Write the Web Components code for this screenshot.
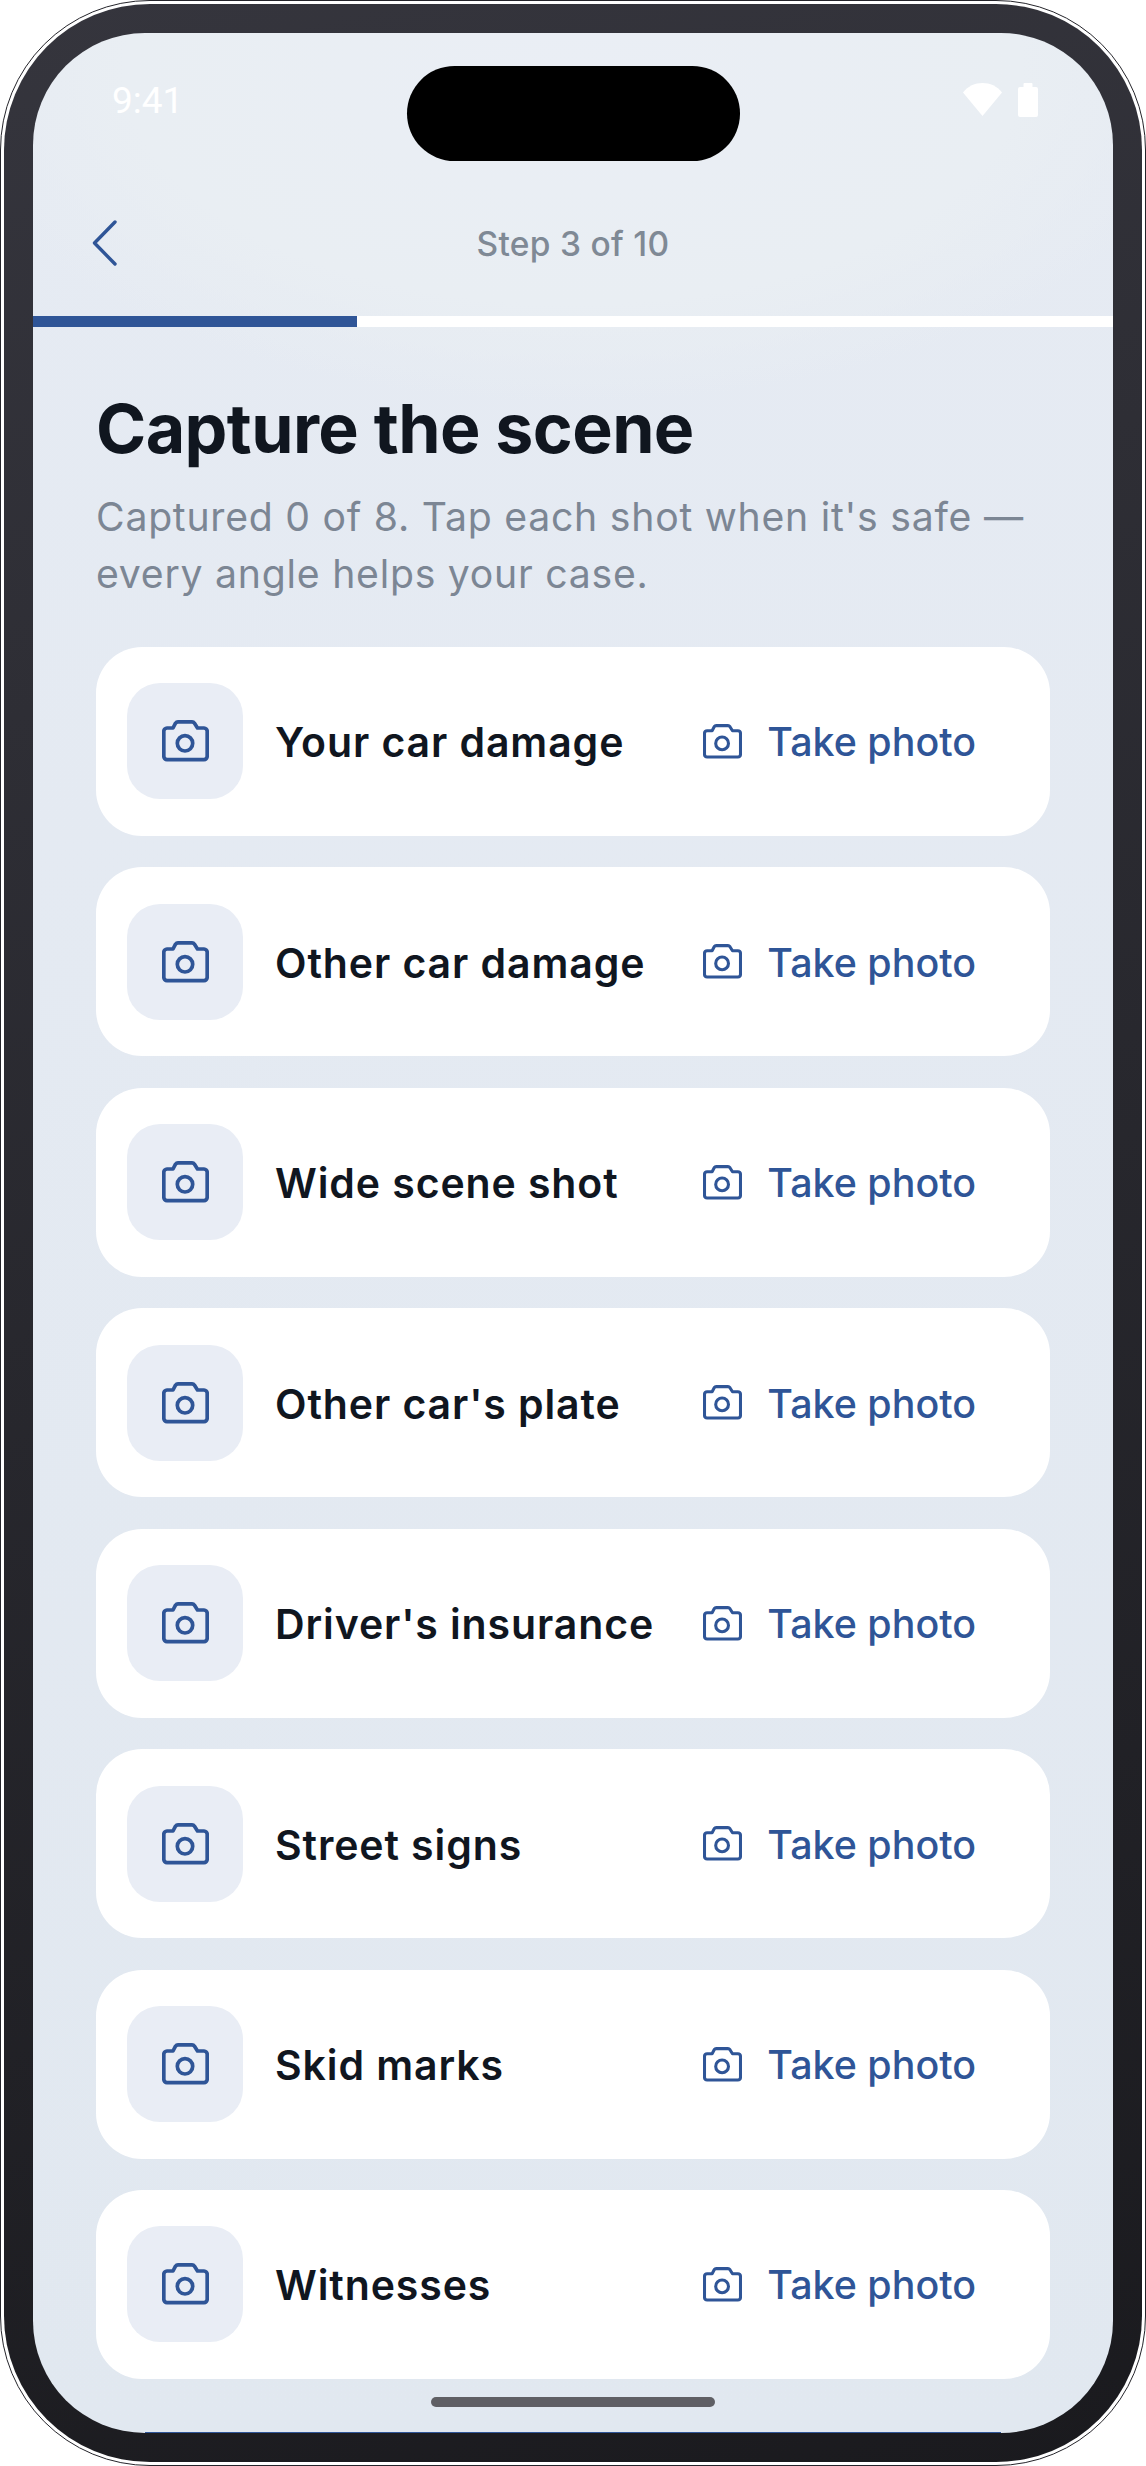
<!DOCTYPE html>
<html lang="en">
<head>
<meta charset="utf-8">
<title>Capture the scene</title>
<style>
  html, body { margin: 0; background: #fff; }
  body { font-family: Inter, "Liberation Sans", sans-serif; }
</style>
</head>
<body>
<phone-frame>
  <status-bar></status-bar>
  <step-header step="Step 3 of 10" progress="30"></step-header>
  <capture-list title="Capture the scene" intro="Captured 0 of 8. Tap each shot when it's safe — every angle helps your case.">
    <shot-row label="Your car damage"></shot-row>
    <shot-row label="Other car damage"></shot-row>
    <shot-row label="Wide scene shot"></shot-row>
    <shot-row label="Other car's plate"></shot-row>
    <shot-row label="Driver's insurance"></shot-row>
    <shot-row label="Street signs"></shot-row>
    <shot-row label="Skid marks"></shot-row>
    <shot-row label="Witnesses"></shot-row>
  </capture-list>
</phone-frame>

<script>
const CAMERA = `
  <path d="M16 1.9H30a3 3 0 0 1 2.5 1.3L35.5 8H42a3.3 3.3 0 0 1 3.2 3.3V36.3a3.3 3.3 0 0 1-3.2 3.3H5a3.3 3.3 0 0 1-3.2-3.3V11.3A3.3 3.3 0 0 1 5 8H11L13.5 3.2A3 3 0 0 1 16 1.9Z"/>
  <circle cx="23" cy="23.3" r="7.7"/>`;

class PhoneFrame extends HTMLElement {
  connectedCallback() {
    this.attachShadow({ mode: 'open' });
    this.shadowRoot.innerHTML = `
      <style>
        :host { display: block; width: 1146px; height: 2466px; box-sizing: border-box;
          border: 1px solid #25252b; border-radius: 150px; padding: 3px; background: #fff; }
        .bezel { height: 100%; box-sizing: border-box; padding: 29px; border-radius: 146px;
          background: linear-gradient(165deg, #35353d 0%, #1a1a1e 100%); }
        .screen { position: relative; height: 100%; overflow: hidden; border-radius: 112px;
          display: flex; flex-direction: column;
          background:
            radial-gradient(ellipse 640px 330px at 50% 40px, #eaeef5 0%, #e9eef3 70%, rgba(233,238,243,0) 100%),
            linear-gradient(180deg, #e6ebf3 0%, #e1e8f0 100%); }
        .island { position: absolute; left: 374px; top: 33px; width: 333px; height: 95px;
          border-radius: 48px; background: #000; }
        .home { position: absolute; left: 398px; top: 2364px; width: 284px; height: 10px;
          border-radius: 5px; background: #5f5f64; }
        .edge { position: absolute; left: 112px; right: 112px; bottom: 0; height: 1px; background: #2f5597; }
      </style>
      <div class="bezel">
        <div class="screen">
          <slot></slot>
          <div class="island"></div>
          <div class="home"></div>
          <div class="edge"></div>
        </div>
      </div>`;
  }
}

class StatusBar extends HTMLElement {
  connectedCallback() {
    this.attachShadow({ mode: 'open' });
    this.shadowRoot.innerHTML = `
      <style>
        :host { display: flex; align-items: center; justify-content: space-between;
          height: 134px; padding: 0 75px 0 79px; color: #fff; }
        .time { font: 400 37px/1 Roboto, sans-serif; }
        .icons { display: flex; align-items: center; gap: 16px; }
        svg { display: block; fill: #fff; }
      </style>
      <span class="time">9:41</span>
      <span class="icons">
        <svg width="39" height="34" viewBox="0 0 39 34"><path d="M0 9.5C5 3 12 0 19.5 0S34 3 39 9.5L19.5 33Z"/></svg>
        <svg width="20" height="34" viewBox="0 0 20 34"><path d="M5.5 1a1 1 0 0 1 1-1h7a1 1 0 0 1 1 1V4H18a2 2 0 0 1 2 2V32a2 2 0 0 1-2 2H2a2 2 0 0 1-2-2V6a2 2 0 0 1 2-2H5.5Z"/></svg>
      </span>`;
  }
}

class StepHeader extends HTMLElement {
  connectedCallback() {
    this.attachShadow({ mode: 'open' });
    this.shadowRoot.innerHTML = `
      <style>
        :host { display: block; }
        .bar { display: grid; grid-template-columns: 120px 1fr 120px; align-items: center;
          height: 149px; box-sizing: border-box; padding-top: 3px; }
        .back { padding-left: 59px; }
        svg { display: block; fill: none; stroke: #2f5597; stroke-width: 3.4; stroke-linecap: round; stroke-linejoin: round; }
        .step { padding-top: 2px; text-align: center; font-size: 33.5px; font-weight: 500; color: #7f8995; letter-spacing: .3px; }
        .track { height: 11px; background: #fff; }
        .fill { height: 100%; background: #2f5597; }
      </style>
      <div class="bar">
        <div class="back"><svg width="26" height="46" viewBox="0 0 26 46"><path d="M23 2 2.5 23 23 44"/></svg></div>
        <div class="step">${this.getAttribute('step')}</div>
        <div></div>
      </div>
      <div class="track"><div class="fill" style="width:${this.getAttribute('progress')}%"></div></div>`;
  }
}

class CaptureList extends HTMLElement {
  connectedCallback() {
    this.attachShadow({ mode: 'open' });
    this.shadowRoot.innerHTML = `
      <style>
        :host { display: block; padding: 0 63px; }
        h1 { margin: 61px 0 0; font-size: 68px; line-height: 80px; font-weight: 700; color: #10161f; letter-spacing: -0.6px; }
        p { margin: 19.6px 0 0; font-size: 39.2px; line-height: 57px; color: #7c8694; letter-spacing: .75px; }
        .rows { display: flex; flex-direction: column; gap: 31.43px; margin-top: 45.4px; }
      </style>
      <h1>${this.getAttribute('title')}</h1>
      <p>${this.getAttribute('intro')}</p>
      <div class="rows"><slot></slot></div>`;
  }
}

class ShotRow extends HTMLElement {
  connectedCallback() {
    this.attachShadow({ mode: 'open' });
    this.shadowRoot.innerHTML = `
      <style>
        :host { display: flex; align-items: center; height: 189px; box-sizing: border-box;
          padding: 0 74px 0 31px; background: #fff; border-radius: 46px; }
        .tile { flex: none; width: 116px; height: 116px; border-radius: 33px; background: #e9edf5;
          display: flex; align-items: center; justify-content: center; }
        .label { flex: 1; margin-left: 32px; padding-top: 2px; font-size: 41px; font-weight: 600; color: #10161f; letter-spacing: .9px; white-space: nowrap; }
        .action { display: flex; align-items: center; gap: 25px; font-size: 39.4px; font-weight: 500; color: #2f5597; }
        .action span { padding-top: 2px; }
        svg { display: block; fill: none; stroke: #2f5597; stroke-width: 3.7; stroke-linejoin: round; }
      </style>
      <div class="tile"><svg width="47" height="42" viewBox="0 0 47 42">${CAMERA}</svg></div>
      <div class="label">${this.getAttribute('label')}</div>
      <div class="action"><svg width="39" height="35" viewBox="0 0 47 42">${CAMERA}</svg><span>Take photo</span></div>`;
  }
}

customElements.define('phone-frame', PhoneFrame);
customElements.define('status-bar', StatusBar);
customElements.define('step-header', StepHeader);
customElements.define('capture-list', CaptureList);
customElements.define('shot-row', ShotRow);
</script>
</body>
</html>
